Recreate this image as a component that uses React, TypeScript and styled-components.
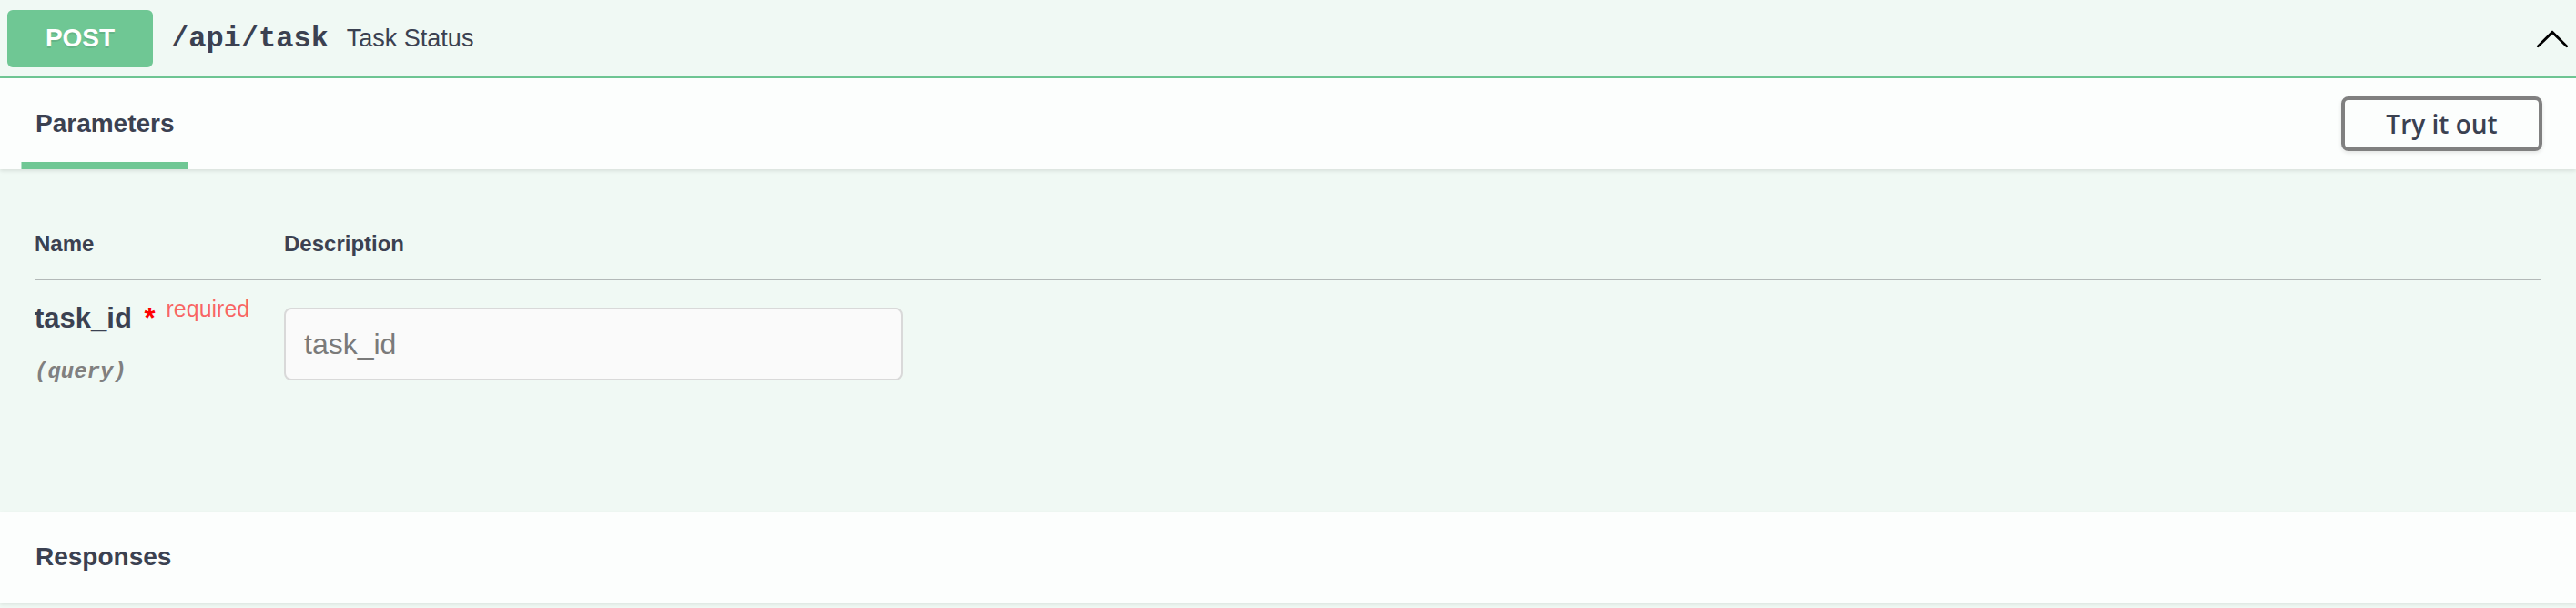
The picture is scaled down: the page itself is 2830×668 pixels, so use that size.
import React from "react";
import styled, { createGlobalStyle } from "styled-components";

const GREEN = "#6fc794";
const BG = "#f0f9f4";
const INK = "#3b4151";

const Global = createGlobalStyle`
  html, body { margin: 0; padding: 0; background: ${BG}; overflow: hidden; }
  * { box-sizing: border-box; }
`;

const Block = styled.section`
  width: 100%;
  height: 668px;
  background: ${BG};
  font-family: "Liberation Sans", Arial, sans-serif;
  color: ${INK};
`;

const Summary = styled.div`
  display: flex;
  align-items: center;
  height: 86px;
  padding: 0 6px 0 8px;
  border-bottom: 2px solid ${GREEN};
`;

const Method = styled.span`
  display: flex;
  align-items: center;
  justify-content: center;
  flex: none;
  width: 160px;
  height: 63px;
  border-radius: 6px;
  background: ${GREEN};
  color: #fff;
  font-size: 28px;
  font-weight: 700;
  text-shadow: 0 2px 0 rgba(0, 0, 0, 0.1);
`;

const Path = styled.span`
  padding: 0 20px;
  font-family: "Liberation Mono", "Courier New", monospace;
  font-size: 32px;
  font-weight: 700;
  color: ${INK};
`;

const Description = styled.span`
  flex: 1 1 auto;
  font-size: 27px;
  color: ${INK};
`;

const Chevron = styled.svg`
  width: 40px;
  height: 40px;
  flex: none;
`;

const SectionHeader = styled.div`
  display: flex;
  align-items: center;
  justify-content: space-between;
  height: 100px;
  padding: 0 37px 0 39px;
  background: rgba(255, 255, 255, 0.8);
  box-shadow: 0 2px 4px rgba(0, 0, 0, 0.1);
`;

const Tab = styled.div<{ $active?: boolean }>`
  position: relative;
  align-self: stretch;
  display: flex;
  align-items: center;
  font-size: 28px;
  font-weight: 700;
  color: ${INK};
  &::after {
    content: "";
    display: ${(p) => (p.$active ? "block" : "none")};
    position: absolute;
    bottom: 0;
    left: 50%;
    transform: translateX(-50%);
    width: 120%;
    height: 8px;
    background: ${GREEN};
  }
`;

const TryButton = styled.button`
  width: 221px;
  height: 60px;
  border: 4px solid #808080;
  border-radius: 8px;
  background: transparent;
  box-shadow: 0 2px 4px rgba(0, 0, 0, 0.1);
  font-family: "Open Sans", "Noto Sans", sans-serif;
  font-size: 28px;
  font-weight: 600;
  color: ${INK};
  padding: 0;
`;

const Body = styled.div`
  min-height: 376px;
  padding: 44px 38px 0 38px;
`;

const Table = styled.table`
  width: 100%;
  border-collapse: collapse;
`;

const Th = styled.th<{ $w?: number }>`
  width: ${(p) => (p.$w ? `${p.$w}px` : "auto")};
  padding: 24px 0;
  text-align: left;
  font-size: 24px;
  font-weight: 700;
  color: ${INK};
  border-bottom: 2px solid #b3b9b8;
`;

const Td = styled.td`
  padding: 20px 0;
  vertical-align: top;
`;

const ParamName = styled.div`
  margin-top: 4px;
  font-size: 31px;
  font-weight: 700;
  color: ${INK};
  white-space: nowrap;
`;

const Star = styled.span`
  padding-left: 5px;
  color: #ff0000;
`;

const Required = styled.span`
  padding: 0 10px 0 12px;
  font-size: 25px;
  font-weight: 400;
  line-height: 0;
  vertical-align: 12px;
  color: rgba(255, 0, 0, 0.6);
`;

const ParamIn = styled.div`
  margin-top: 27px;
  font-family: "Liberation Mono", "Courier New", monospace;
  font-size: 24px;
  font-weight: 700;
  font-style: italic;
  color: #808080;
`;

const TextInput = styled.input`
  display: block;
  margin: 10px 0;
  width: 680px;
  height: 80px;
  padding: 0 20px;
  border: 2px solid #d9d9d9;
  border-radius: 8px;
  background: #fafafa;
  font-family: "Liberation Sans", Arial, sans-serif;
  font-size: 32px;
  color: ${INK};
  outline: none;
  &::placeholder {
    color: #7a7a7a;
  }
`;

export default function App() {
  return (
    <>
      <Global />
      <Block>
        <Summary>
          <Method>POST</Method>
          <Path>/api/task</Path>
          <Description>Task Status</Description>
          <Chevron viewBox="0 0 20 20" aria-hidden="true">
            <path
              fill="#000"
              d="M 17.418 14.908 C 17.69 15.176 18.127 15.176 18.397 14.908 C 18.667 14.64 18.668 14.207 18.397 13.939 L 10.489 6.109 C 10.219 5.841 9.782 5.841 9.51 6.109 L 1.602 13.939 C 1.332 14.207 1.332 14.64 1.602 14.908 C 1.873 15.176 2.311 15.176 2.581 14.908 L 10 7.767 L 17.418 14.908 Z"
            />
          </Chevron>
        </Summary>

        <SectionHeader>
          <Tab $active>Parameters</Tab>
          <TryButton>Try it out</TryButton>
        </SectionHeader>

        <Body>
          <Table>
            <thead>
              <tr>
                <Th $w={274}>Name</Th>
                <Th>Description</Th>
              </tr>
            </thead>
            <tbody>
              <tr>
                <Td>
                  <ParamName>
                    task_id<Star>&nbsp;*</Star>
                    <Required>required</Required>
                  </ParamName>
                  <ParamIn>(query)</ParamIn>
                </Td>
                <Td>
                  <TextInput type="text" placeholder="task_id" />
                </Td>
              </tr>
            </tbody>
          </Table>
        </Body>

        <SectionHeader>
          <Tab>Responses</Tab>
        </SectionHeader>
      </Block>
    </>
  );
}
